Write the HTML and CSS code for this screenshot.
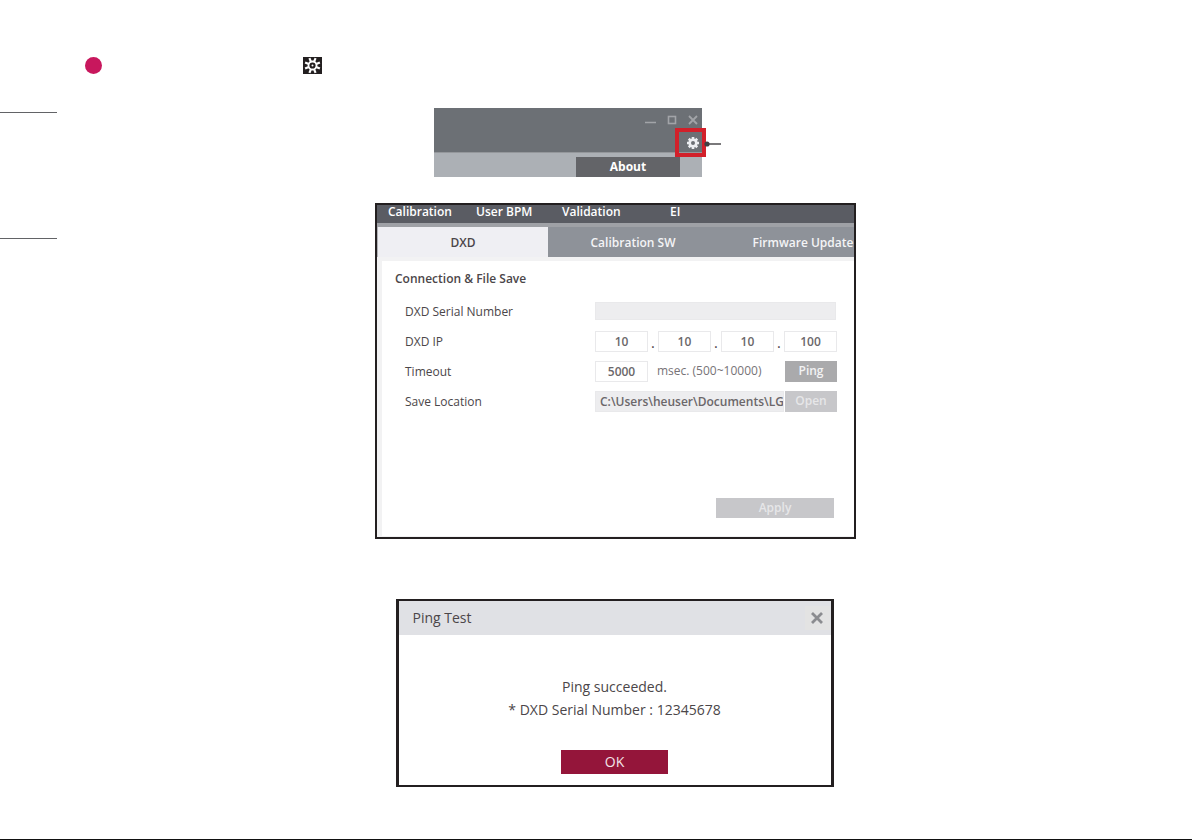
FILE: index.html
```html
<!DOCTYPE html>
<html lang="en">
<head>
<meta charset="utf-8">
<title>Calibration Settings</title>
<link rel="stylesheet" href="styles.css">
</head>
<body>
<div class="page">
  <aside class="rail"><div class="rail-section"></div></aside>
  <main class="content">
    <div class="step">
      <span class="bullet"></span>
      <svg class="step-icon" viewBox="0 0 19 17" aria-hidden="true">
        <rect width="19" height="17" fill="#231f20"/>
        <g transform="translate(9.5 8.5)">
          <g stroke="#fff" stroke-width="2.2">
            <path d="M0-8V-4M0 4V8M-8 0H-4M4 0H8" transform="rotate(22.5)"/>
            <path d="M0-8V-4M0 4V8M-8 0H-4M4 0H8" transform="rotate(67.5)"/>
          </g>
          <circle r="4" fill="#231f20" stroke="#fff" stroke-width="1.8"/>
          <circle r="1" fill="#fff"/>
        </g>
      </svg>
    </div>

    <section class="window">
      <div class="window-bar">
        <div class="window-controls">
          <svg viewBox="0 0 54 12" width="54" height="12" fill="none" stroke="#a2a4a8">
            <path d="M0 8.5H11" stroke-width="1.5"/>
            <rect x="23.5" y="2.5" width="7" height="7" stroke-width="1.6"/>
            <path d="M44 2L52 10M52 2L44 10" stroke-width="1.8"/>
          </svg>
        </div>
      </div>
      <div class="window-strip"><button class="about" type="button">About</button></div>
      <button class="settings" type="button" aria-label="Settings">
        <svg viewBox="0 0 14 14" width="14" height="14">
          <g transform="translate(7 7)" fill="none" stroke="#eceef1">
            <path d="M0-6V-3M0 3V6M-6 0H-3M3 0H6" stroke-width="2.6"/>
            <path d="M0-6V-3M0 3V6M-6 0H-3M3 0H6" stroke-width="2.6" transform="rotate(45)"/>
            <circle r="3.3" stroke-width="2.6"/>
          </g>
        </svg>
      </button>
      <svg class="callout" viewBox="0 0 17 6" width="17" height="6" aria-hidden="true">
        <path d="M3 3H17" stroke="#414042" stroke-width="1.4"/>
        <circle cx="3" cy="3" r="2.6" fill="#414042"/>
      </svg>
    </section>

    <section class="config">
      <nav class="menu">
        <a href="#calibration">Calibration</a>
        <a href="#bpm">User BPM</a>
        <a href="#validation">Validation</a>
        <a href="#ei">EI</a>
      </nav>
      <div class="tabs" role="tablist">
        <button class="tab tab-active" type="button" role="tab" aria-selected="true">DXD</button>
        <button class="tab" type="button" role="tab">Calibration SW</button>
        <button class="tab" type="button" role="tab">Firmware Update</button>
      </div>
      <form class="panel">
        <h2 class="heading">Connection &amp; File Save</h2>
        <div class="row">
          <label for="serial">DXD Serial Number</label>
          <div class="controls"><input class="field field-serial" id="serial" type="text" readonly></div>
        </div>
        <div class="row">
          <label for="ip1">DXD IP</label>
          <div class="controls">
            <input class="field" id="ip1" type="text" value="10">
            <span class="dot">.</span>
            <input class="field" type="text" value="10" aria-label="IP part 2">
            <span class="dot">.</span>
            <input class="field" type="text" value="10" aria-label="IP part 3">
            <span class="dot">.</span>
            <input class="field" type="text" value="100" aria-label="IP part 4">
          </div>
        </div>
        <div class="row">
          <label for="timeout">Timeout</label>
          <div class="controls">
            <input class="field" id="timeout" type="text" value="5000">
            <span class="hint">msec. (500~10000)</span>
            <button class="button" type="button">Ping</button>
          </div>
        </div>
        <div class="row">
          <label for="location">Save Location</label>
          <div class="controls">
            <input class="field field-path" id="location" type="text" value="C:\Users\heuser\Documents\LG" readonly>
            <button class="button button-off" type="button">Open</button>
          </div>
        </div>
        <button class="button button-off apply" type="button">Apply</button>
      </form>
    </section>

    <section class="dialog" role="dialog" aria-labelledby="dialog-title">
      <header class="dialog-head">
        <h2 class="dialog-title" id="dialog-title">Ping Test</h2>
        <button class="close" type="button" aria-label="Close">
          <svg viewBox="0 0 14 14" width="14" height="14"><path d="M2 2L12 12M12 2L2 12" stroke="#8b8c90" stroke-width="2.8"/></svg>
        </button>
      </header>
      <div class="dialog-body">
        <p>Ping succeeded.</p>
        <p>* DXD Serial Number : 12345678</p>
        <button class="ok" type="button">OK</button>
      </div>
    </section>
  </main>
</div>
</body>
</html>
```
FILE: styles.css
```css
* { box-sizing: border-box; }

body {
  margin: 0;
  background: #fff;
  color: #4b4649;
  font: 12px/16px "Open Sans", "Noto Sans", sans-serif;
}

button, input { font: inherit; color: inherit; margin: 0; padding: 0; border: 0; border-radius: 0; }
h2, p { margin: 0; }

.page {
  display: grid;
  grid-template-columns: 57px 1fr;
  min-height: 100vh;
  border-bottom: 1px solid #111;
}

.rail { padding-top: 112px; }
.rail-section { height: 127px; border: solid #626366; border-width: 1px 0; }

.content {
  display: flex;
  flex-direction: column;
  align-items: center;
  padding: 57px 46px 52px 28px;
}

.step { display: flex; align-self: stretch; align-items: center; gap: 201px; height: 17px; margin-bottom: 34px; }
.bullet { width: 17px; height: 17px; border-radius: 50%; background: #c8175d; }
.step-icon { width: 19px; height: 17px; }

/* Title bar with the settings button */
.window { position: relative; width: 268px; margin: 0 95px 26px 0; }
.window-bar { height: 44px; padding: 6px 3px; background: #6c7075; }
.window-controls { display: flex; justify-content: flex-end; }
.window-strip { display: flex; justify-content: flex-end; height: 25px; padding: 4px 22px 0 0; background: #acb0b5; border-top: 1px solid #94979b; }
.about { width: 104px; background: #636468; color: #fff; font-weight: 700; }
.settings {
  position: absolute;
  top: 20px;
  right: -4px;
  display: flex;
  align-items: center;
  justify-content: flex-end;
  width: 31px;
  height: 29px;
  padding-right: 2px;
  border: 4px solid #d2202a;
  background: none;
}
.callout { position: absolute; top: 33px; left: 270px; }

/* Configuration window */
.config { width: 100%; max-width: 481px; margin-bottom: 60px; border: 2px solid #231f20; overflow: hidden; }
.menu {
  display: grid;
  grid-template-columns: 88px 86px 108px 1fr;
  height: 22px;
  padding-left: 11px;
  border-bottom: 4px solid #9fa1a6;
  background: #5a5c63;
  line-height: 14px;
  font-weight: 600;
}
.menu a { color: #fff; text-decoration: none; }
.tabs { display: flex; height: 30px; background: #8e9299; border-left: 1px solid #b1b2b6; }
.tab { flex: 0 0 170px; padding-top: 2px; background: none; color: #f4f4f6; font-weight: 600; }
.tab-active { background: #efeff3; color: #4b4649; }
.panel {
  display: flex;
  flex-direction: column;
  padding: 10px 17px 18px 13px;
  border: solid #f2f2f3;
  border-width: 4px 0 1px 5px;
}
.heading { margin-bottom: 9px; font-size: 12px; line-height: 16px; font-weight: 600; }
.row { display: grid; grid-template-columns: 190px 242px; align-items: center; height: 30px; margin-left: 10px; }
.row label { padding-top: 2px; }
.controls { display: flex; align-items: center; justify-content: space-between; }
.field { width: 53px; height: 21px; border: 1px solid #e9e9eb; background: #fff; text-align: center; font-weight: 600; color: #6b676a; }
.field-serial { width: 241px; height: 18px; background: #ededef; }
.field-path { width: 189px; background: #ededef; text-align: left; padding-left: 4px; }
.dot { align-self: flex-end; line-height: 16px; font-weight: 600; }
.hint { flex: 1; padding-left: 9px; color: #777377; }
.button { width: 52px; height: 21px; background: #aaaaac; color: #f3f3f4; font-weight: 600; }
.button-off { background: #c7c7ca; color: #e6e6e8; }
.apply { align-self: flex-end; width: 118px; height: 20px; margin: 82px 3px 0 0; }

/* Ping result */
.dialog { width: 100%; max-width: 438px; margin-right: 2px; border: solid #231f20; border-width: 2px 3px; font-size: 14px; }
.dialog-head { display: flex; align-items: center; justify-content: space-between; height: 34px; padding: 0 1px 0 14px; background: #e0e1e5; }
.dialog-title { font-size: 14px; font-weight: 400; }
.close { display: grid; place-items: center; width: 25px; height: 24px; background: #e3e3e3; }
.dialog-body { display: flex; flex-direction: column; align-items: center; padding: 40px 0 11px; line-height: 23px; }
.ok { width: 107px; height: 24px; margin-top: 29px; background: #94153a; color: #f3e4e8; line-height: 20px; }
```
